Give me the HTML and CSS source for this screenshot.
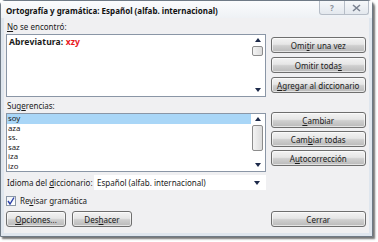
FILE: index.html
```html
<!DOCTYPE html>
<html lang="es">
<head>
<meta charset="utf-8">
<title>Ortografía y gramática</title>
<link rel="stylesheet" href="styles.css">
</head>
<body>
<div class="window">
  <div class="titlebar">
    <span class="title">Ortografía y gramática: Español (alfab. internacional)</span>
    <div class="caps">
      <span class="cap help">?</span>
      <span class="cap close">
        <svg width="9" height="8" viewBox="0 0 9 8"><path d="M1 1 L8 7 M8 1 L1 7" stroke="#7a8290" stroke-width="1.6" fill="none"/></svg>
      </span>
    </div>
  </div>
  <div class="client">
    <div class="leftcol">
      <div class="label first"><u>N</u>o se encontró:</div>
      <div class="box notfound">
        <div class="boxtext"><b>Abreviatura: <span class="err">xzy</span></b></div>
        <div class="vscroll">
          <span class="arr up"></span>
          <span class="thumb small"></span>
          <span class="fill"></span>
          <span class="arr down"></span>
        </div>
      </div>
      <div class="label sug">Sug<u>e</u>rencias:</div>
      <div class="box list">
        <ul class="items">
          <li class="sel">soy</li>
          <li>aza</li>
          <li>ss.</li>
          <li>saz</li>
          <li>iza</li>
          <li>izo</li>
        </ul>
        <div class="vscroll">
          <span class="arr up"></span>
          <span class="thumb big"></span>
          <span class="fill"></span>
          <span class="arr down"></span>
        </div>
      </div>
      <div class="langrow">
        <span class="langlabel">Idioma del <u>d</u>iccionario:</span>
        <div class="combo"><span>Español (alfab. internacional)</span><span class="arr down"></span></div>
      </div>
      <div class="checkrow">
        <span class="check"><svg width="8" height="8" viewBox="0 0 8 8"><path d="M1 4 L3 7 L7 0.5" stroke="#2a3fa8" stroke-width="1.4" fill="none"/></svg></span>
        <span>Re<u>v</u>isar gramática</span>
      </div>
      <div class="bottombtns">
        <button class="btn w60"><u>O</u>pciones...</button>
        <button class="btn w60">Des<u>h</u>acer</button>
      </div>
    </div>
    <div class="rightcol">
      <div class="group g1">
        <button class="btn">Omi<u>t</u>ir una vez</button>
        <button class="btn">Omitir toda<u>s</u></button>
        <button class="btn"><u>A</u>gregar al diccionario</button>
      </div>
      <div class="group g2">
        <button class="btn"><u>C</u>ambiar</button>
        <button class="btn">Cam<u>b</u>iar todas</button>
        <button class="btn">A<u>u</u>tocorrección</button>
      </div>
      <div class="spacer"></div>
      <button class="btn">Cerrar</button>
    </div>
  </div>
</div>
</body>
</html>
```
FILE: styles.css
```css
* { box-sizing: border-box; }
html, body { margin: 0; padding: 0; background: #ffffff; }
body {
  font-family: "Noto Sans", "Open Sans", sans-serif;
  font-size: 8px;
  color: #1a1a1a;
  width: 378px;
  height: 242px;
  overflow: hidden;
}
.window {
  width: 373px;
  height: 237px;
  border: 1px solid #6f7a86;
  border-radius: 5px 5px 0 0;
  background: #dfe6ee;
  box-shadow: 2px 2px 2px rgba(0,0,0,0.55);
  display: flex;
  flex-direction: column;
}
.titlebar {
  height: 17px;
  display: flex;
  align-items: flex-start;
  justify-content: space-between;
  padding: 0 3px 0 5px;
  background: linear-gradient(#fbfcfd, #eef1f5);
}
.title {
  font-weight: bold;
  font-size: 8px;
  color: #111;
  margin-top: 4px;
}
.caps { display: flex; margin-top: 0; }
.cap {
  height: 14px;
  display: flex;
  align-items: center;
  justify-content: center;
  border: 1px solid #b6bdc7;
  border-top: none;
  background: linear-gradient(#f6f8fa, #e3e8ee);
  color: #8a919b;
  font-size: 8px;
  font-weight: bold;
}
.cap.help { width: 26px; border-radius: 0 0 0 3px; }
.cap.close { width: 24px; border-left: none; border-radius: 0 0 3px 0; }
.client {
  flex: 1;
  margin: 0 3px 3px 3px;
  background: #f0f0f2;
  display: flex;
  gap: 5px;
  padding: 0 3px 6px 2px;
}
.leftcol {
  width: 261px;
  display: flex;
  flex-direction: column;
}
.rightcol {
  width: 96px;
  display: flex;
  flex-direction: column;
}
.label { height: 11px; line-height: 11px; padding-left: 1px; }
.label.first { margin-top: 3px; margin-bottom: 2px; }
.label.sug { margin-top: 3px; margin-bottom: 2px; }
.box {
  background: #fff;
  border: 1px solid #8a96a6;
  display: flex;
}
.box.notfound { height: 63px; }
.box.list { height: 59px; }
.boxtext { flex: 1; padding: 1px 2px; font-size: 8.6px; letter-spacing: 0.1px; }
.err { color: #e8161b; }
.vscroll {
  width: 14px;
  display: flex;
  flex-direction: column;
  align-items: center;
  padding: 3px 0 4px;
}
.fill { flex: 1; }
.arr { width: 0; height: 0; border-left: 3.5px solid transparent; border-right: 3.5px solid transparent; }
.arr.up { border-bottom: 4px solid #1d2a4a; }
.arr.down { border-top: 4px solid #1d2a4a; }
.thumb {
  width: 11px;
  border: 1px solid #8c8c8c;
  border-radius: 2px;
  background: linear-gradient(90deg, #f4f4f4, #dcdcdc);
  margin-top: 4px;
}
.thumb.small { height: 10px; }
.thumb.big { height: 26px; }
.items { list-style: none; margin: 0; padding: 0; flex: 1; }
.items li { height: 9.5px; line-height: 9.5px; padding-left: 1px; font-size: 7.8px; }
.items li.sel { background: #a9d6f7; }
.langrow { display: flex; align-items: center; margin-top: 3px; height: 15px; }
.langlabel { width: 88px; padding-left: 1px; }
.combo {
  flex: 1;
  height: 15px;
  background: #fff;
  display: flex;
  align-items: center;
  justify-content: space-between;
  padding: 0 6px 0 3px;
}
.checkrow { display: flex; align-items: center; gap: 4px; margin-top: 5px; height: 11px; }
.check {
  width: 10px; height: 10px;
  border: 1px solid #8a96a6;
  background: linear-gradient(#f2f4f7, #fff);
  display: flex; align-items: center; justify-content: center;
}
.bottombtns { display: flex; gap: 6px; margin-top: auto; }
.btn {
  font-family: inherit;
  font-size: 8px;
  color: #1a1a1a;
  height: 16px;
  padding: 0;
  border: 1px solid #6e6e6e;
  border-radius: 3px;
  background: linear-gradient(#f3f3f3 0%, #e6e6e6 45%, #cfcfcf 55%, #b9b9b9 100%);
  box-shadow: inset 0 0 0 1px rgba(255,255,255,0.6);
  width: 100%;
  text-align: center;
}
.btn.w60 { width: 60px; }
.group { display: flex; flex-direction: column; }
.g1 { margin-top: 19px; gap: 4px; }
.g2 { margin-top: 19px; gap: 3px; }
.spacer { flex: 1; }
```
